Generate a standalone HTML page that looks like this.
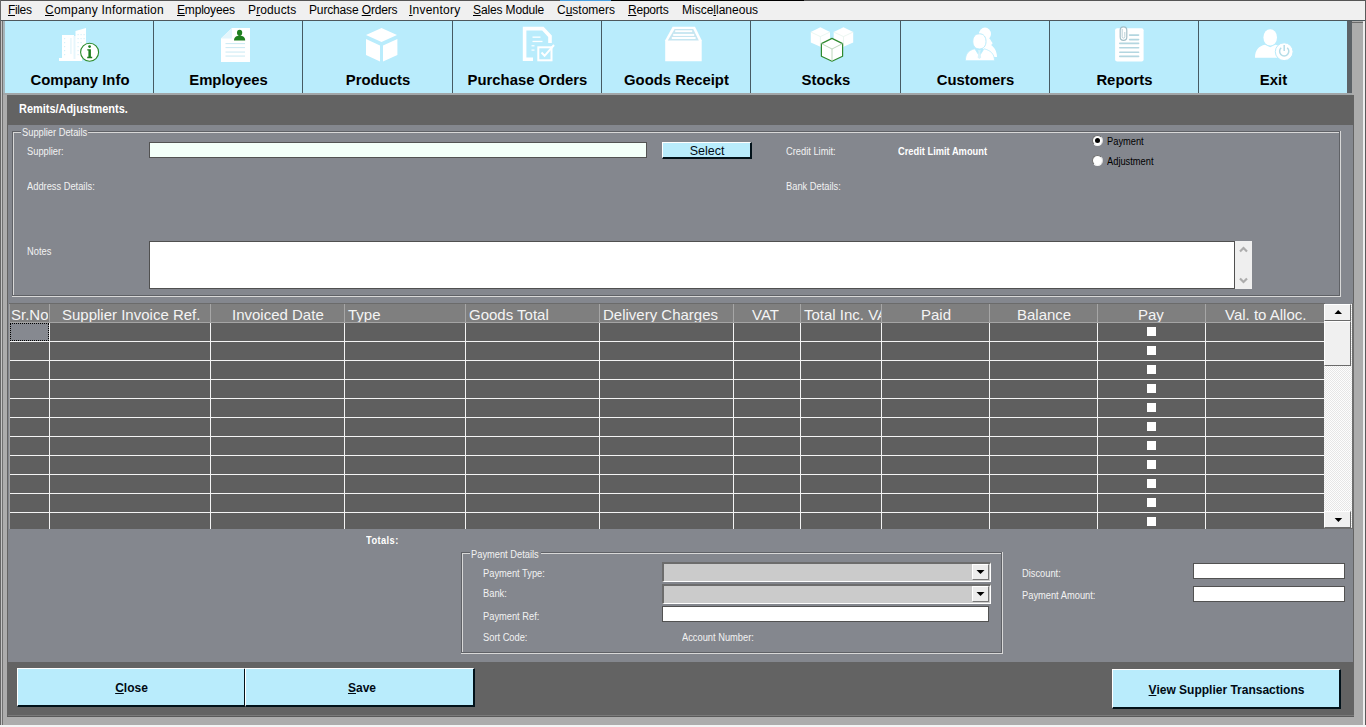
<!DOCTYPE html>
<html><head><meta charset="utf-8"><style>
html,body{margin:0;padding:0;width:1366px;height:727px;overflow:hidden;background:#acacac}
body>div,body>svg{position:absolute}
div{position:absolute}
.t{white-space:pre;line-height:1;font-family:"Liberation Sans", sans-serif}
u{text-decoration:underline;text-underline-offset:1px}
</style></head><body>
<div style="left:0px;top:0px;width:1366px;height:727px;background:#acacac;"></div><div style="left:0px;top:0px;width:1366px;height:1px;background:#555555;"></div><div style="left:560px;top:0px;width:51px;height:1px;background:#4aa0e0;"></div><div style="left:611px;top:0px;width:193px;height:1px;background:#000000;"></div><div style="left:0px;top:0px;width:1px;height:727px;background:#666666;"></div><div style="left:1px;top:21px;width:1px;height:706px;background:#c4c4c4;"></div><div style="left:2px;top:21px;width:1px;height:706px;background:#717171;"></div><div style="left:1365px;top:0px;width:1px;height:727px;background:#5a5a5a;"></div><div style="left:1363px;top:21px;width:2px;height:706px;background:#ededed;"></div><div style="left:0px;top:725px;width:1366px;height:2px;background:#f4f4f4;"></div><div style="left:1352px;top:22px;width:11px;height:1px;background:#6a6a6a;"></div><div style="left:1px;top:1px;width:1364px;height:19px;background:#f0f0f0;"></div><div style="left:1px;top:20px;width:1364px;height:1px;background:#4d575c;"></div><div class="t " style="left:8px;top:4px;font-size:12px;font-weight:normal;color:#000000;letter-spacing:-0.35px;"><u>F</u>iles</div><div class="t " style="left:45px;top:4px;font-size:12px;font-weight:normal;color:#000000;letter-spacing:0.22px;"><u>C</u>ompany Information</div><div class="t " style="left:177px;top:4px;font-size:12px;font-weight:normal;color:#000000;letter-spacing:-0.18px;"><u>E</u>mployees</div><div class="t " style="left:248px;top:4px;font-size:12px;font-weight:normal;color:#000000;letter-spacing:0.12px;">P<u>r</u>oducts</div><div class="t " style="left:309px;top:4px;font-size:12px;font-weight:normal;color:#000000;letter-spacing:-0.15px;">Purchase <u>O</u>rders</div><div class="t " style="left:409px;top:4px;font-size:12px;font-weight:normal;color:#000000;letter-spacing:0.22px;"><u>I</u>nventory</div><div class="t " style="left:473px;top:4px;font-size:12px;font-weight:normal;color:#000000;letter-spacing:-0.14px;"><u>S</u>ales Module</div><div class="t " style="left:557px;top:4px;font-size:12px;font-weight:normal;color:#000000;letter-spacing:0px;">C<u>u</u>stomers</div><div class="t " style="left:628px;top:4px;font-size:12px;font-weight:normal;color:#000000;letter-spacing:-0.22px;"><u>R</u>eports</div><div class="t " style="left:682px;top:4px;font-size:12px;font-weight:normal;color:#000000;letter-spacing:0px;">Misce<u>l</u>laneous</div><div style="left:3px;top:21px;width:2px;height:72px;background:#a6b4b9;"></div><div style="left:5px;top:21px;width:1342px;height:72px;background:#b9ecfc;"></div><div style="left:1347px;top:21px;width:5px;height:72px;background:#5c6267;"></div><div style="left:3px;top:93px;width:1349px;height:2px;background:#a2a6a8;"></div><div style="left:153px;top:21px;width:1px;height:72px;background:#465a63;"></div><div style="left:302px;top:21px;width:1px;height:72px;background:#465a63;"></div><div style="left:452px;top:21px;width:1px;height:72px;background:#465a63;"></div><div style="left:601px;top:21px;width:1px;height:72px;background:#465a63;"></div><div style="left:750px;top:21px;width:1px;height:72px;background:#465a63;"></div><div style="left:900px;top:21px;width:1px;height:72px;background:#465a63;"></div><div style="left:1049px;top:21px;width:1px;height:72px;background:#465a63;"></div><div style="left:1198px;top:21px;width:1px;height:72px;background:#465a63;"></div><div class="t" style="left:5px;top:72px;width:148px;text-align:center;font-size:15.45px;padding-left:2px;box-sizing:border-box;transform:scaleX(0.962);transform-origin:50% 0;font-weight:bold;color:#000">Company Info</div><div class="t" style="left:153px;top:72px;width:149px;text-align:center;font-size:15.45px;padding-left:2px;box-sizing:border-box;transform:scaleX(0.962);transform-origin:50% 0;font-weight:bold;color:#000">Employees</div><div class="t" style="left:302px;top:72px;width:150px;text-align:center;font-size:15.45px;padding-left:2px;box-sizing:border-box;transform:scaleX(0.962);transform-origin:50% 0;font-weight:bold;color:#000">Products</div><div class="t" style="left:452px;top:72px;width:149px;text-align:center;font-size:15.45px;padding-left:2px;box-sizing:border-box;transform:scaleX(0.962);transform-origin:50% 0;font-weight:bold;color:#000">Purchase Orders</div><div class="t" style="left:601px;top:72px;width:149px;text-align:center;font-size:15.45px;padding-left:2px;box-sizing:border-box;transform:scaleX(0.962);transform-origin:50% 0;font-weight:bold;color:#000">Goods Receipt</div><div class="t" style="left:750px;top:72px;width:150px;text-align:center;font-size:15.45px;padding-left:2px;box-sizing:border-box;transform:scaleX(0.962);transform-origin:50% 0;font-weight:bold;color:#000">Stocks</div><div class="t" style="left:900px;top:72px;width:149px;text-align:center;font-size:15.45px;padding-left:2px;box-sizing:border-box;transform:scaleX(0.962);transform-origin:50% 0;font-weight:bold;color:#000">Customers</div><div class="t" style="left:1049px;top:72px;width:149px;text-align:center;font-size:15.45px;padding-left:2px;box-sizing:border-box;transform:scaleX(0.962);transform-origin:50% 0;font-weight:bold;color:#000">Reports</div><div class="t" style="left:1198px;top:72px;width:149px;text-align:center;font-size:15.45px;padding-left:2px;box-sizing:border-box;transform:scaleX(0.962);transform-origin:50% 0;font-weight:bold;color:#000">Exit</div><div style="left:7px;top:95px;width:1347px;height:622px;background:#636363;"></div><div style="left:8px;top:715px;width:1346px;height:1px;background:#7a7a7a;"></div><div style="left:7px;top:716px;width:1347px;height:1px;background:#5a5a5a;"></div><div class="t " style="left:19px;top:103px;font-size:12.5px;font-weight:bold;color:#ffffff;transform:scaleX(0.875);transform-origin:0 0">Remits/Adjustments.</div><div style="left:8px;top:125px;width:1345px;height:537px;background:#84878e;"></div><div style="left:12px;top:131px;width:1328px;height:1px;background:#5f6166;"></div><div style="left:13px;top:132px;width:1327px;height:1px;background:#d8d8d8;"></div><div style="left:12px;top:131px;width:1px;height:165px;background:#5f6166;"></div><div style="left:13px;top:132px;width:1px;height:164px;background:#d8d8d8;"></div><div style="left:12px;top:295px;width:1328px;height:1px;background:#5f6166;"></div><div style="left:12px;top:296px;width:1329px;height:1px;background:#d8d8d8;"></div><div style="left:1339px;top:131px;width:1px;height:165px;background:#5f6166;"></div><div style="left:1340px;top:131px;width:1px;height:166px;background:#d8d8d8;"></div><div style="left:21px;top:127px;width:67px;height:12px;background:#84878e;"></div><div class="t " style="left:22px;top:128px;font-size:10px;font-weight:normal;color:#f2f2f2;transform:scaleX(0.93);transform-origin:0 0;">Supplier Details</div><div class="t " style="left:27px;top:147px;font-size:10px;font-weight:normal;color:#f2f2f2;transform:scaleX(0.93);transform-origin:0 0;">Supplier:</div><div class="t " style="left:27px;top:182px;font-size:10px;font-weight:normal;color:#f2f2f2;transform:scaleX(0.93);transform-origin:0 0;">Address Details:</div><div class="t " style="left:27px;top:247px;font-size:10px;font-weight:normal;color:#f2f2f2;transform:scaleX(0.93);transform-origin:0 0;">Notes</div><div class="t " style="left:786px;top:147px;font-size:10px;font-weight:normal;color:#f2f2f2;transform:scaleX(0.93);transform-origin:0 0;">Credit Limit:</div><div class="t " style="left:898px;top:147px;font-size:10px;font-weight:bold;color:#ffffff;transform:scaleX(0.93);transform-origin:0 0;">Credit Limit Amount</div><div class="t " style="left:786px;top:182px;font-size:10px;font-weight:normal;color:#f2f2f2;transform:scaleX(0.93);transform-origin:0 0;">Bank Details:</div><div style="left:149px;top:142px;width:498px;height:16px;background:#f3fff9;border:1px solid #525252;box-sizing:border-box"></div><div style="left:662px;top:142px;width:90px;height:17px;background:#b9ecfc;box-sizing:border-box;border-top:1px solid #ffffff;border-left:1px solid #ffffff;border-right:2px solid #02121a;border-bottom:2px solid #02121a"></div><div class="t" style="left:662px;top:145px;width:90px;text-align:center;font-size:12.5px;font-weight:normal;color:#000a14">Select</div><div style="left:1092.0px;top:135.0px;width:11px;height:11px;border-radius:50%;background:#ffffff;box-sizing:border-box;border:1px solid;border-color:#707070 #dcdcdc #f4f4f4 #707070"></div><div style="left:1095.0px;top:138.0px;width:5px;height:5px;border-radius:50%;background:#000"></div><div style="left:1092.0px;top:155.0px;width:11px;height:11px;border-radius:50%;background:#ffffff;box-sizing:border-box;border:1px solid;border-color:#707070 #dcdcdc #f4f4f4 #707070"></div><div class="t " style="left:1107px;top:137px;font-size:10px;font-weight:normal;color:#000000;transform:scaleX(0.93);transform-origin:0 0;">Payment</div><div class="t " style="left:1107px;top:157px;font-size:10px;font-weight:normal;color:#000000;transform:scaleX(0.93);transform-origin:0 0;">Adjustment</div><div style="left:149px;top:241px;width:1086px;height:48px;background:#ffffff;border:1px solid #505050;box-sizing:border-box"></div><div style="left:1235px;top:241px;width:17px;height:48px;background:#efefef;"></div><svg style="position:absolute;left:1235px;top:241px" width="17" height="48"><path d="M5 10.5 L8.5 7 L12 10.5" stroke="#acacac" stroke-width="2.2" fill="none"/><path d="M5 37.5 L8.5 41 L12 37.5" stroke="#acacac" stroke-width="2.2" fill="none"/></svg><div style="left:9px;top:303px;width:1316px;height:1px;background:#6b6b6b;"></div><div style="left:9px;top:304px;width:1316px;height:18px;background:#7f7f7f;"></div><div style="left:9px;top:304px;width:1px;height:225px;background:#a3a3a3;"></div><div style="left:10px;top:322px;width:1315px;height:1px;background:#a4a4a4;"></div><div style="left:10px;top:323px;width:1315px;height:206px;background:#5f5f5f;"></div><div style="left:49px;top:304px;width:1px;height:18px;background:#a6a6a6;"></div><div style="left:49px;top:323px;width:1px;height:206px;background:#f4f4f4;"></div><div style="left:210px;top:304px;width:1px;height:18px;background:#a6a6a6;"></div><div style="left:210px;top:323px;width:1px;height:206px;background:#f4f4f4;"></div><div style="left:344px;top:304px;width:1px;height:18px;background:#a6a6a6;"></div><div style="left:344px;top:323px;width:1px;height:206px;background:#f4f4f4;"></div><div style="left:465px;top:304px;width:1px;height:18px;background:#a6a6a6;"></div><div style="left:465px;top:323px;width:1px;height:206px;background:#f4f4f4;"></div><div style="left:599px;top:304px;width:1px;height:18px;background:#a6a6a6;"></div><div style="left:599px;top:323px;width:1px;height:206px;background:#f4f4f4;"></div><div style="left:733px;top:304px;width:1px;height:18px;background:#a6a6a6;"></div><div style="left:733px;top:323px;width:1px;height:206px;background:#f4f4f4;"></div><div style="left:800px;top:304px;width:1px;height:18px;background:#a6a6a6;"></div><div style="left:800px;top:323px;width:1px;height:206px;background:#f4f4f4;"></div><div style="left:881px;top:304px;width:1px;height:18px;background:#a6a6a6;"></div><div style="left:881px;top:323px;width:1px;height:206px;background:#f4f4f4;"></div><div style="left:989px;top:304px;width:1px;height:18px;background:#a6a6a6;"></div><div style="left:989px;top:323px;width:1px;height:206px;background:#f4f4f4;"></div><div style="left:1097px;top:304px;width:1px;height:18px;background:#a6a6a6;"></div><div style="left:1097px;top:323px;width:1px;height:206px;background:#f4f4f4;"></div><div style="left:1205px;top:304px;width:1px;height:18px;background:#a6a6a6;"></div><div style="left:1205px;top:323px;width:1px;height:206px;background:#f4f4f4;"></div><div style="left:10px;top:341px;width:1315px;height:1px;background:#f4f4f4;"></div><div style="left:10px;top:360px;width:1315px;height:1px;background:#f4f4f4;"></div><div style="left:10px;top:379px;width:1315px;height:1px;background:#f4f4f4;"></div><div style="left:10px;top:398px;width:1315px;height:1px;background:#f4f4f4;"></div><div style="left:10px;top:417px;width:1315px;height:1px;background:#f4f4f4;"></div><div style="left:10px;top:436px;width:1315px;height:1px;background:#f4f4f4;"></div><div style="left:10px;top:455px;width:1315px;height:1px;background:#f4f4f4;"></div><div style="left:10px;top:474px;width:1315px;height:1px;background:#f4f4f4;"></div><div style="left:10px;top:493px;width:1315px;height:1px;background:#f4f4f4;"></div><div style="left:10px;top:512px;width:1315px;height:1px;background:#f4f4f4;"></div><div style="left:10px;top:323px;width:39px;height:18px;background:#868990;box-sizing:border-box;border:1px dotted #000"></div><div style="left:1147px;top:327px;width:9px;height:9px;background:#ffffff;"></div><div style="left:1147px;top:346px;width:9px;height:9px;background:#ffffff;"></div><div style="left:1147px;top:365px;width:9px;height:9px;background:#ffffff;"></div><div style="left:1147px;top:384px;width:9px;height:9px;background:#ffffff;"></div><div style="left:1147px;top:403px;width:9px;height:9px;background:#ffffff;"></div><div style="left:1147px;top:422px;width:9px;height:9px;background:#ffffff;"></div><div style="left:1147px;top:441px;width:9px;height:9px;background:#ffffff;"></div><div style="left:1147px;top:460px;width:9px;height:9px;background:#ffffff;"></div><div style="left:1147px;top:479px;width:9px;height:9px;background:#ffffff;"></div><div style="left:1147px;top:498px;width:9px;height:9px;background:#ffffff;"></div><div style="left:1147px;top:517px;width:9px;height:9px;background:#ffffff;"></div><div style="left:10px;top:304px;width:38px;height:18px;overflow:hidden"><div class="t" style="left:1px;top:3px;font-size:15px;color:#f4f4f4">Sr.No</div></div><div style="left:50px;top:304px;width:160px;height:18px;overflow:hidden"><div class="t" style="left:12px;top:3px;font-size:15px;color:#f4f4f4">Supplier Invoice Ref.</div></div><div style="left:211px;top:304px;width:133px;height:18px;overflow:hidden"><div class="t" style="left:21px;top:3px;font-size:15px;color:#f4f4f4">Invoiced Date</div></div><div style="left:345px;top:304px;width:120px;height:18px;overflow:hidden"><div class="t" style="left:3px;top:3px;font-size:15px;color:#f4f4f4">Type</div></div><div style="left:466px;top:304px;width:133px;height:18px;overflow:hidden"><div class="t" style="left:3px;top:3px;font-size:15px;color:#f4f4f4">Goods Total</div></div><div style="left:600px;top:304px;width:133px;height:18px;overflow:hidden"><div class="t" style="left:3px;top:3px;font-size:15px;color:#f4f4f4">Delivery Charges</div></div><div style="left:734px;top:304px;width:66px;height:18px;overflow:hidden"><div class="t" style="left:18px;top:3px;font-size:15px;color:#f4f4f4">VAT</div></div><div style="left:801px;top:304px;width:80px;height:18px;overflow:hidden"><div class="t" style="left:3px;top:3px;font-size:15px;color:#f4f4f4">Total Inc. VAT</div></div><div style="left:882px;top:304px;width:107px;height:18px;overflow:hidden"><div class="t" style="left:39px;top:3px;font-size:15px;color:#f4f4f4">Paid</div></div><div style="left:990px;top:304px;width:107px;height:18px;overflow:hidden"><div class="t" style="left:27px;top:3px;font-size:15px;color:#f4f4f4">Balance</div></div><div style="left:1098px;top:304px;width:107px;height:18px;overflow:hidden"><div class="t" style="left:40px;top:3px;font-size:15px;color:#f4f4f4">Pay</div></div><div style="left:1206px;top:304px;width:118px;height:18px;overflow:hidden"><div class="t" style="left:19px;top:3px;font-size:15px;color:#f4f4f4">Val. to Alloc.</div></div><div style="left:1324px;top:304px;width:28px;height:225px;background:#6e6e6e;"></div><div style="left:1324px;top:304px;width:28px;height:224px;background:#f0f0f0;background:repeating-conic-gradient(#fdfdfd 0 25%,#e6e6e6 0 50%) 0 0/2px 2px"></div><div style="left:1324px;top:304px;width:27px;height:17px;background:#f0f0f0;box-sizing:border-box;border-top:1px solid #ffffff;border-left:1px solid #ffffff;border-right:1px solid #6a6a6a;border-bottom:1px solid #6a6a6a"></div><div style="left:1324px;top:321px;width:27px;height:45px;background:#f0f0f0;box-sizing:border-box;border-top:1px solid #ffffff;border-left:1px solid #ffffff;border-right:1px solid #6a6a6a;border-bottom:1px solid #6a6a6a"></div><div style="left:1324px;top:511px;width:27px;height:17px;background:#f0f0f0;box-sizing:border-box;border-top:1px solid #ffffff;border-left:1px solid #ffffff;border-right:1px solid #6a6a6a;border-bottom:1px solid #6a6a6a"></div><svg style="position:absolute;left:1324px;top:304px" width="27" height="17"><path d="M10.5 10 L14.2 6 L18 10 Z" fill="#000"/></svg><svg style="position:absolute;left:1324px;top:511px" width="27" height="17"><path d="M10.6 7 L18.2 7 L14.4 11 Z" fill="#000"/></svg><div style="left:1352px;top:303px;width:2px;height:226px;background:#6e6e6e;"></div><div class="t " style="left:366px;top:536px;font-size:10px;font-weight:bold;color:#ffffff;letter-spacing:0.45px;transform:scaleX(0.93);transform-origin:0 0;">Totals:</div><div style="left:461px;top:552px;width:541px;height:1px;background:#5f6166;"></div><div style="left:462px;top:553px;width:540px;height:1px;background:#d8d8d8;"></div><div style="left:461px;top:552px;width:1px;height:101px;background:#5f6166;"></div><div style="left:462px;top:553px;width:1px;height:100px;background:#d8d8d8;"></div><div style="left:461px;top:652px;width:541px;height:1px;background:#5f6166;"></div><div style="left:461px;top:653px;width:542px;height:1px;background:#d8d8d8;"></div><div style="left:1001px;top:552px;width:1px;height:101px;background:#5f6166;"></div><div style="left:1002px;top:552px;width:1px;height:102px;background:#d8d8d8;"></div><div style="left:470px;top:548px;width:71px;height:12px;background:#84878e;"></div><div class="t " style="left:471px;top:550px;font-size:10px;font-weight:normal;color:#f2f2f2;transform:scaleX(0.93);transform-origin:0 0;">Payment Details</div><div class="t " style="left:483px;top:569px;font-size:10px;font-weight:normal;color:#f2f2f2;transform:scaleX(0.93);transform-origin:0 0;">Payment Type:</div><div class="t " style="left:483px;top:589px;font-size:10px;font-weight:normal;color:#f2f2f2;transform:scaleX(0.93);transform-origin:0 0;">Bank:</div><div class="t " style="left:483px;top:612px;font-size:10px;font-weight:normal;color:#f2f2f2;transform:scaleX(0.93);transform-origin:0 0;">Payment Ref:</div><div class="t " style="left:483px;top:633px;font-size:10px;font-weight:normal;color:#f2f2f2;transform:scaleX(0.93);transform-origin:0 0;">Sort Code:</div><div class="t " style="left:682px;top:633px;font-size:10px;font-weight:normal;color:#f2f2f2;transform:scaleX(0.93);transform-origin:0 0;">Account Number:</div><div style="left:662px;top:562px;width:329px;height:20px;background:#cbcbcb;box-sizing:border-box;border-top:2px solid #6c6c6c;border-left:2px solid #6c6c6c;border-right:1px solid #ffffff;border-bottom:1px solid #ffffff"></div><div style="left:972px;top:564px;width:17px;height:16px;background:#ececec;box-sizing:border-box;border-top:1px solid #ffffff;border-left:1px solid #ffffff;border-right:1px solid #777;border-bottom:1px solid #777"></div><svg style="position:absolute;left:972px;top:564px" width="17" height="16"><path d="M4.5 6.0 L12.5 6.0 L8.5 10.0 Z" fill="#000"/></svg><div style="left:662px;top:584px;width:329px;height:20px;background:#cbcbcb;box-sizing:border-box;border-top:2px solid #6c6c6c;border-left:2px solid #6c6c6c;border-right:1px solid #ffffff;border-bottom:1px solid #ffffff"></div><div style="left:972px;top:586px;width:17px;height:16px;background:#ececec;box-sizing:border-box;border-top:1px solid #ffffff;border-left:1px solid #ffffff;border-right:1px solid #777;border-bottom:1px solid #777"></div><svg style="position:absolute;left:972px;top:586px" width="17" height="16"><path d="M4.5 6.0 L12.5 6.0 L8.5 10.0 Z" fill="#000"/></svg><div style="left:662px;top:606px;width:327px;height:16px;background:#ffffff;box-sizing:border-box;border:1px solid #525252"></div><div class="t " style="left:1022px;top:569px;font-size:10px;font-weight:normal;color:#f2f2f2;transform:scaleX(0.93);transform-origin:0 0;">Discount:</div><div class="t " style="left:1022px;top:591px;font-size:10px;font-weight:normal;color:#f2f2f2;transform:scaleX(0.93);transform-origin:0 0;">Payment Amount:</div><div style="left:1193px;top:563px;width:152px;height:16px;background:#ffffff;box-sizing:border-box;border:1px solid #525252"></div><div style="left:1193px;top:586px;width:152px;height:16px;background:#ffffff;box-sizing:border-box;border:1px solid #525252"></div><div style="left:17px;top:668px;width:229px;height:39px;background:#b9ecfc;box-sizing:border-box;border-top:1px solid #ffffff;border-left:1px solid #ffffff;border-right:2px solid #02121a;border-bottom:2px solid #02121a"></div><div class="t" style="left:17px;top:682px;width:229px;text-align:center;font-size:12px;font-weight:bold;color:#000a14"><u>C</u>lose</div><div style="left:245px;top:668px;width:230px;height:39px;background:#b9ecfc;box-sizing:border-box;border-top:1px solid #ffffff;border-left:1px solid #ffffff;border-right:2px solid #02121a;border-bottom:2px solid #02121a"></div><div class="t" style="left:247px;top:682px;width:230px;text-align:center;font-size:12px;font-weight:bold;color:#000a14"><u>S</u>ave</div><div style="left:1112px;top:669px;width:229px;height:40px;background:#b9ecfc;box-sizing:border-box;border-top:1px solid #ffffff;border-left:1px solid #ffffff;border-right:2px solid #02121a;border-bottom:2px solid #02121a"></div><div class="t" style="left:1112px;top:684px;width:229px;text-align:center;font-size:12px;font-weight:bold;color:#000a14"><u>V</u>iew Supplier Transactions</div>
<svg style="position:absolute;left:0;top:0" width="1366" height="95" viewBox="0 0 1366 95">
<g fill="#ffffff">
 <!-- company info: buildings -->
 <path d="M59 58 H82 V61 H59 Z"/>
 <path d="M62 35 H74 V59 H62 Z"/>
 <path d="M73.5 36 H76 V59 H73.5 Z" fill="#e6f6fc"/>
 <path d="M75.5 31 L86 28 V59 H75.5 Z"/>
</g>
<g fill="#d8f1f9">
 <rect x="64" y="38" width="1.2" height="1.2"/><rect x="64" y="42" width="1.2" height="1.2"/><rect x="64" y="46" width="1.2" height="1.2"/><rect x="64" y="50" width="1.2" height="1.2"/><rect x="64" y="54" width="1.2" height="1.2"/>
 <rect x="70.5" y="38" width="0.9" height="16"/>
 <rect x="77.5" y="34" width="1.2" height="1.2"/><rect x="80.5" y="34" width="1.2" height="1.2"/><rect x="83.5" y="34" width="1.2" height="1.2"/>
 <rect x="77.5" y="38" width="1.2" height="1.2"/><rect x="80.5" y="38" width="1.2" height="1.2"/><rect x="83.5" y="38" width="1.2" height="1.2"/>
 <rect x="77.5" y="42" width="1.2" height="1.2"/><rect x="80.5" y="42" width="1.2" height="1.2"/>
 <rect x="77.5" y="46" width="1.2" height="1.2"/><rect x="77.5" y="50" width="1.2" height="1.2"/><rect x="77.5" y="54" width="1.2" height="1.2"/>
</g>
<circle cx="89.6" cy="52.3" r="9" fill="#ffffff" stroke="#2a8a2a" stroke-width="1.1"/>
<circle cx="89.6" cy="46.6" r="1.4" fill="#1e7e1e"/>
<path d="M87.3 49.3 H90.9 V56.8 H92.2 V58.2 H87.2 V56.8 H88.4 V50.6 H87.3 Z" fill="#1e7e1e"/>

 <!-- employees: document with person -->
<path d="M232 28 H250 V62 H221 V38.5 Z" fill="#ffffff"/>
<path d="M221 38.5 L232 28 V38.5 Z" fill="#e4f6fc"/>
<g fill="#1e7f1e">
 <ellipse cx="239.6" cy="32.8" rx="2.6" ry="3.1"/>
 <path d="M234 40.5 C234 37 236.5 35.8 239.6 35.8 C242.7 35.8 245.2 37 245.2 40.5 Z"/>
</g>
<g fill="#c4e7f2">
 <rect x="225.5" y="43.2" width="19.5" height="0.9"/>
 <rect x="225.5" y="47.2" width="19.5" height="0.9"/>
 <rect x="225.5" y="51.6" width="19.5" height="0.9"/>
 <rect x="225.5" y="55.6" width="19.5" height="0.9"/>
</g>

 <!-- products: cube -->
<g fill="#ffffff">
 <path d="M381.5 28 L397 35 L381.5 42 L366 35 Z"/>
 <path d="M366 39 L380 45.5 V61.5 L366 55 Z"/>
 <path d="M383 45.5 L397.4 39 V55 L383 61.5 Z"/>
</g>

 <!-- purchase orders -->
<g fill="none" stroke="#ffffff" stroke-width="3.6" stroke-linejoin="miter">
 <path d="M533 59.3 H524.6 V28.6 H542.8 L550 36.2 V43"/>
</g>
<g fill="#ffffff">
 <rect x="532.5" y="36.5" width="8" height="1.3"/>
 <rect x="532.5" y="40.8" width="10" height="1.3"/>
 <rect x="531.5" y="45.2" width="3" height="1.2"/>
 <rect x="531.5" y="49.5" width="3" height="1.2"/>
</g>
<rect x="538.3" y="47.3" width="13.2" height="13" fill="none" stroke="#ffffff" stroke-width="2"/>
<path d="M541.5 52.5 L544.6 55.8 L554 45" fill="none" stroke="#ffffff" stroke-width="2"/>

 <!-- goods receipt -->
<path d="M672.6 26.8 H695 L701.7 40.3 V61.3 H665.2 V40.3 Z" fill="#ffffff"/>
<path d="M674.6 29 H693.2 L698.8 40.4 H667.8 Z" fill="#c6e6f1"/>
<g fill="#ffffff">
 <rect x="675.2" y="30.3" width="17" height="1.8"/>
 <rect x="673.2" y="33.9" width="21" height="2"/>
 <rect x="671.8" y="37" width="23.8" height="2"/>
</g>
 <!-- stocks -->
<g fill="#ffffff">
 <path d="M820.4 27.3 L830 32 V42.5 L820.4 46.8 L810.8 42.5 V32 Z"/>
 <path d="M843.5 27.3 L853.2 32 V42.5 L843.5 46.8 L833.7 42.5 V32 Z"/>
</g>
<path d="M810.8 32 L820.4 36.6 L830 32 M820.4 36.6 V46.8 M833.7 32 L843.5 36.6 L853.2 32 M843.5 36.6 V46.8" fill="none" stroke="#e6f4ee" stroke-width="0.8"/>
<path d="M832 38.4 L842.6 43.6 V56.3 L832 61.3 L821.4 56.3 V43.6 Z" fill="#ffffff" stroke="#2f8a2f" stroke-width="1.2" stroke-linejoin="round"/>
<path d="M821.4 43.6 L832 49 L842.6 43.6 M832 49 V61.3" fill="none" stroke="#b7d3b7" stroke-width="0.9"/>

 <!-- customers -->
<g fill="#ffffff">
 <ellipse cx="985" cy="34" rx="6" ry="6.5"/>
 <path d="M978 36 C985 37 991 38 991 41 C993 43 993 44 991 45 C994 47 997 51 997 57 H986 Z"/>
 <path d="M979.4 33.8 C983.8 33.8 986 37 986 41.5 C986 46 983.5 49 979.4 49 C975.3 49 972.8 46 972.8 41.5 C972.8 37 975 33.8 979.4 33.8 Z" stroke="#b9ecfc" stroke-width="1"/>
 <path d="M965.4 60.7 C965.4 53.5 968.8 50.2 974.8 48.8 L979.4 56 L984 48.8 C990 50.2 994.5 53.5 994.5 60.7 Z" stroke="#b9ecfc" stroke-width="0.8"/>
</g>
<path d="M977.8 50.2 H981 L980.2 52 L981.2 57.5 L979.4 59 L977.6 57.5 L978.6 52 Z" fill="#d9f3fb"/>

 <!-- reports -->
<rect x="1115.1" y="28.2" width="28.5" height="33.4" rx="2" fill="#ffffff"/>
<g fill="#b3d6e0">
 <rect x="1128.8" y="34.3" width="10.6" height="1.6" rx="0.8"/>
 <rect x="1128.8" y="38.8" width="10.6" height="1.6" rx="0.8"/>
 <rect x="1119" y="42.6" width="20.4" height="1.6" rx="0.8"/>
 <rect x="1119" y="47" width="20.4" height="1.6" rx="0.8"/>
 <rect x="1119" y="51.4" width="20.4" height="1.6" rx="0.8"/>
 <rect x="1119" y="55.6" width="20.4" height="1.6" rx="0.8"/>
</g>
<path d="M1120.2 30.2 A3.3 3.3 0 0 1 1126.8 30.2 V37 A3.3 3.3 0 0 1 1120.2 37 Z" fill="#ffffff" stroke="#a3bfc8" stroke-width="1.2"/><path d="M1122.2 29 V36.8 A1.3 1.3 0 0 0 1124.8 36.8 V32" fill="none" stroke="#b5cdd4" stroke-width="0.9"/>

 <!-- exit -->
<g fill="#ffffff">
 <ellipse cx="1270.2" cy="37.4" rx="6.8" ry="8.2"/>
 <path d="M1255 57.8 C1255 50 1259 46 1265 44.8 L1270.2 47.2 L1275.4 44.8 C1279 45.5 1282 47 1283 49 L1282 57.8 Z"/>
 <circle cx="1284.2" cy="51.7" r="8.9" stroke="#b9ecfc" stroke-width="1"/>
</g>
<path d="M1281.2 47.8 A4.6 4.6 0 1 0 1287.2 47.8" fill="none" stroke="#b6dde8" stroke-width="1.5"/>
<path d="M1284.2 45 V51" stroke="#b6dde8" stroke-width="1.5"/>
</svg>

</body></html>
